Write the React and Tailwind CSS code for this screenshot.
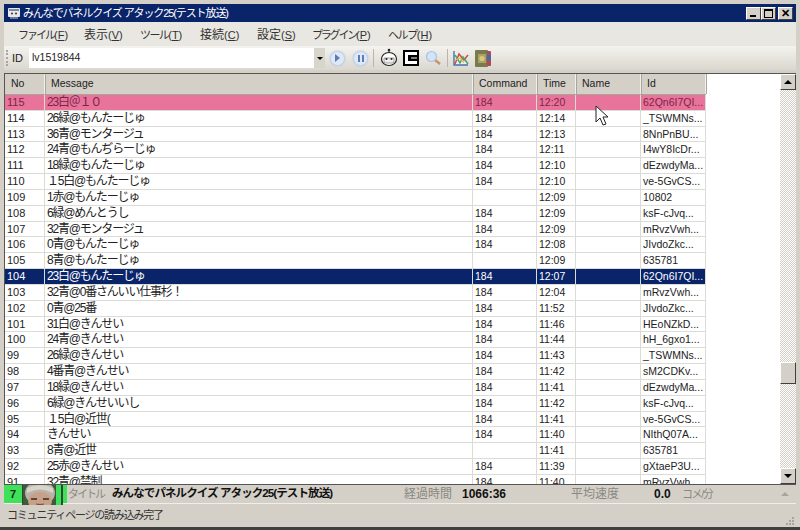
import { Fragment } from "react";

const menus = [
  { label: "ファイル", key: "F", width: "w-[66px]", tone: "text-[11px] tracking-[-2px]" },
  { label: "表示", key: "V", width: "w-[56px]", tone: "" },
  { label: "ツール", key: "T", width: "w-[60px]", tone: "text-[11px] tracking-[-1.6px]" },
  { label: "接続", key: "C", width: "w-[57px]", tone: "" },
  { label: "設定", key: "S", width: "w-[55px]", tone: "" },
  { label: "プラグイン", key: "P", width: "w-[76px]", tone: "text-[11px] tracking-[-2.2px]" },
  { label: "ヘルプ", key: "H", width: "w-[60px]", tone: "text-[11px] tracking-[-1.4px]" },
];

const rows = [
  ["115", "23白＠１０", "184", "12:20", "62Qn6I7QI...", "hit"],
  ["114", "26緑@もんたーじゅ", "184", "12:14", "_TSWMNs..."],
  ["113", "36青@モンタージュ", "184", "12:13", "8NnPnBU..."],
  ["112", "24青@もんぢらーじゅ", "184", "12:11", "I4wY8IcDr..."],
  ["111", "18緑@もんたーじゅ", "184", "12:10", "dEzwdyMa..."],
  ["110", "１5白@もんたーじゅ", "184", "12:10", "ve-5GvCS..."],
  ["109", "1赤@もんたーじゅ", "", "12:09", "10802"],
  ["108", "6緑@めんとうし", "184", "12:09", "ksF-cJvq..."],
  ["107", "32青@モンタージュ", "184", "12:09", "mRvzVwh..."],
  ["106", "0青@もんたーじゅ", "184", "12:08", "JIvdoZkc..."],
  ["105", "8青@もんたーじゅ", "", "12:09", "635781"],
  ["104", "23白@もんたーじゅ", "184", "12:07", "62Qn6I7QI...", "selected"],
  ["103", "32青@0番さんいい仕事杉！", "184", "12:04", "mRvzVwh..."],
  ["102", "0青@25番", "184", "11:52", "JIvdoZkc..."],
  ["101", "31白@きんせい", "184", "11:46", "HEoNZkD..."],
  ["100", "24青@きんせい", "184", "11:44", "hH_6gxo1..."],
  ["99", "26緑@きんせい", "184", "11:43", "_TSWMNs..."],
  ["98", "4番青@きんせい", "184", "11:42", "sM2CDKv..."],
  ["97", "18緑@きんせい", "184", "11:41", "dEzwdyMa..."],
  ["96", "6緑@きんせいいし", "184", "11:42", "ksF-cJvq..."],
  ["95", "１5白@近世(", "184", "11:41", "ve-5GvCS..."],
  ["94", "きんせい", "184", "11:40", "NIthQ07A..."],
  ["93", "8青@近世", "", "11:41", "635781"],
  ["92", "25赤@きんせい", "184", "11:39", "gXtaeP3U..."],
  ["91", "32青@禁制", "184", "11:40", "mRvzVwh..."],
];

const Cell = ({ className, children }) => (
  <div className={`h-full shrink-0 pl-[2px] overflow-hidden whitespace-pre border-r border-[#dcdcd6] ${className}`}>
    {children}
  </div>
);

const Row = ({ no, message, command, time, id, state }) => {
  const tone =
    state === "hit"
      ? "bg-[#e8749c] text-[#7c2545]"
      : state === "selected"
        ? "bg-[#0a246a] text-white"
        : "bg-white text-[#222]";
  return (
    <div className={`flex h-[15.83px] shrink-0 w-[701px] leading-[15px] text-[10.5px] border-b border-[#dcdcd6] ${tone}`}>
      <Cell className="w-[40px] text-[11px]">{no}</Cell>
      <Cell className="w-[428px] text-[12px] tracking-[-1.2px]">{message}</Cell>
      <Cell className="w-[64px]">{command}</Cell>
      <Cell className="w-[39px]">{time}</Cell>
      <Cell className="w-[65px]"></Cell>
      <Cell className="w-[65px]">{id}</Cell>
    </div>
  );
};

const HeaderCell = ({ className, children }) => (
  <div className={`h-full shrink-0 pl-[6px] flex items-center border-r border-[#f2f0ea] shadow-[1px_0_0_#a8a59c] ${className}`}>
    {children}
  </div>
);

const WinButton = ({ children }) => (
  <div className="w-[15px] h-[13px] bg-[#d4d0c8] border-t border-l border-white border-r border-b border-r-[#404040] border-b-[#404040] flex items-center justify-center">
    {children}
  </div>
);

const RoundButton = ({ children }) => (
  <div className="w-[15px] h-[15px] rounded-full bg-[#dfe8f6] border border-[#c2d3ec] flex items-center justify-center shadow-[0_0_2px_#aebfdc]">
    {children}
  </div>
);

const ScrollButton = ({ children }) => (
  <div className="w-[16px] h-[16px] shrink-0 bg-[#d4d0c8] border-t border-l border-white border-r border-b border-r-[#404040] border-b-[#404040] flex items-center justify-center">
    {children}
  </div>
);

const Face = () => (
  <svg width="41" height="20" viewBox="0 0 41 20">
    <rect width="41" height="20" fill="#3fe05a" />
    <path d="M0 0 V20 M40 0 V20" stroke="#2c4a2c" strokeWidth="2" />
    <rect x="1" y="0" width="33" height="20" fill="#3f5a3a" />
    <ellipse cx="18" cy="8" rx="15" ry="12" fill="#b8b4aa" />
    <path d="M5 8 Q18 1 31 8 L31 3 Q18 -3 5 3 Z" fill="#d8d4ca" />
    <ellipse cx="18" cy="16" rx="12" ry="9" fill="#c8a088" />
    <path d="M9 14 h6 M21 14 h6" stroke="#3a2a22" strokeWidth="1.6" />
    <path d="M14 19 q4 1 8 0" stroke="#7a5040" strokeWidth="1.2" fill="none" />
  </svg>
);

export default function App() {
  return (
    <div className="w-[800px] h-[530px] overflow-hidden bg-[#d4d0c8] flex flex-col pt-[4px] px-[4px] border-b-[3px] border-[#404040] text-[12px] font-['Liberation_Sans','Noto_Sans_CJK_JP',sans-serif] text-[#222]">
      {/* Title bar */}
      <div className="h-[18px] shrink-0 bg-[#0a246a] flex items-center pl-[3px] pr-[3px] text-white">
        <svg width="14" height="12" viewBox="0 0 14 12" className="mr-[2px]">
          <rect x="1" y="1" width="12" height="9" rx="1" fill="#e8e8e8" />
          <rect x="2" y="2" width="10" height="2" fill="#7a8aa8" />
          <circle cx="5" cy="6.5" r="1" fill="#333" />
          <circle cx="9" cy="6.5" r="1" fill="#333" />
          <path d="M3 11 h8" stroke="#ccc" />
        </svg>
        <span className="text-[11px] tracking-[-1.1px] whitespace-nowrap">みんなでパネルクイズ アタック25(テスト放送)</span>
        <div className="ml-auto flex">
          <WinButton>
            <div className="w-[6px] h-[2px] bg-black mt-[6px] -ml-[2px]" />
          </WinButton>
          <WinButton>
            <div className="w-[9px] h-[9px] border border-black border-t-2" />
          </WinButton>
          <div className="ml-[2px]">
            <WinButton>
              <span className="text-[11px] leading-none font-bold text-black">✕</span>
            </WinButton>
          </div>
        </div>
      </div>

      {/* Menu */}
      <div className="h-[24px] shrink-0 bg-[#e9e7e1] flex items-center pl-[14px] pt-[1px] text-[#333]">
        {menus.map((m) => (
          <div key={m.key} className={`shrink-0 whitespace-nowrap ${m.width}`}>
            <span className={m.tone}>{m.label}</span>
            <span className="text-[11px]">
              (<span className="underline">{m.key}</span>)
            </span>
          </div>
        ))}
      </div>

      {/* Toolbar */}
      <div className="h-[24px] shrink-0 bg-gradient-to-b from-[#f4f3ef] to-[#dad7ce] flex items-center pl-[2px]">
        <div className="w-[3px] h-[16px] mr-[3px] border-l-2 border-dotted border-[#a8a59c]" />
        <span className="w-[15px] text-[11px]">ID</span>
        <div className="w-[285px] h-[20px] bg-white flex items-center ml-[2px] pl-[3px] text-[10.5px]">
          <span>lv1519844</span>
        </div>
        <div className="w-[11px] h-[20px] bg-[#d8d5cc] flex items-center justify-center">
          <div className="w-0 h-0 border-x-[3px] border-x-transparent border-t-[3px] border-t-black" />
        </div>
        <div className="flex items-center gap-[8px] ml-[5px]">
          <RoundButton>
            <div className="w-0 h-0 border-y-[4px] border-y-transparent border-l-[5px] border-l-[#5a7db8]" />
          </RoundButton>
          <RoundButton>
            <div className="w-[6px] h-[7px] border-x-2 border-[#5a7db8]" />
          </RoundButton>
        </div>
        <div className="w-px h-[18px] bg-[#b8b5ac] ml-[5px] mr-[6px]" />
        <svg width="18" height="20" viewBox="0 0 18 20">
          <path d="M9 1 v4" stroke="#222" />
          <circle cx="9" cy="2" r="1.3" fill="#222" />
          <ellipse cx="9" cy="11" rx="7.5" ry="6.5" fill="#fff" stroke="#222" strokeWidth="1.2" />
          <path d="M4 10 h10 v3 a2 2 0 0 1 -2 2 h-6 a2 2 0 0 1 -2 -2 Z" fill="#eee" stroke="#666" strokeWidth="0.6" />
          <circle cx="6.5" cy="11" r="1" fill="#222" />
          <circle cx="11.5" cy="11" r="1" fill="#222" />
        </svg>
        <svg width="16" height="16" viewBox="0 0 16 16" className="ml-[5px]">
          <rect width="16" height="16" fill="#000" />
          <rect x="2" y="2" width="12" height="12" fill="#fff" />
          <path d="M5 5 h9 v2.5 h-6 v1 h6 v2.5 h-9 Z" fill="#000" />
        </svg>
        <svg width="16" height="16" viewBox="0 0 16 16" className="ml-[6px]">
          <path d="M10 10 L15 14" stroke="#c89468" strokeWidth="2.4" />
          <circle cx="6.5" cy="6.5" r="5" fill="#d4e4f6" stroke="#a8c4e4" strokeWidth="1.2" />
        </svg>
        <div className="w-px h-[18px] bg-[#b8b5ac] ml-[6px] mr-[5px]" />
        <svg width="16" height="16" viewBox="0 0 16 16">
          <path d="M1 1 V15 H15" stroke="#4a6fa8" strokeWidth="1.4" fill="#eef2f8" />
          <path d="M2 14 L6 4 L11 10 L15 5" stroke="#d84848" fill="none" strokeWidth="1.5" />
          <path d="M2 5 L7 13 L10 7 L15 14" stroke="#48a868" fill="none" strokeWidth="1.5" />
          <path d="M2 10 L7 8 L11 13" stroke="#e8b848" fill="none" strokeWidth="1.2" />
        </svg>
        <svg width="16" height="17" viewBox="0 0 16 17" className="ml-[6px]">
          <rect x="0" y="0" width="13" height="17" rx="1" fill="#7a7a4c" />
          <rect x="12" y="1" width="4" height="15" rx="1" fill="#b04a58" />
          <rect x="12" y="5" width="4" height="5" fill="#4a68a8" />
          <rect x="3" y="4" width="8" height="9" fill="#a8a468" />
          <circle cx="7" cy="8.5" r="2.6" fill="#d8c878" />
        </svg>
      </div>

      {/* List with scrollbar */}
      <div className="h-[411px] shrink-0 mt-[3px] flex flex-col border-t border-l border-[#555] bg-white overflow-hidden">
        <div className="flex flex-1 min-h-0">
          <div className="w-[775px] shrink-0 flex flex-col overflow-hidden">
            <div className="flex h-[21px] shrink-0 w-[701px] bg-[#d4d0c8] border-b border-[#a8a59c] text-[10.5px]">
              <HeaderCell className="w-[40px]">No</HeaderCell>
              <HeaderCell className="w-[428px]">Message</HeaderCell>
              <HeaderCell className="w-[64px]">Command</HeaderCell>
              <HeaderCell className="w-[39px]">Time</HeaderCell>
              <HeaderCell className="w-[65px]">Name</HeaderCell>
              <HeaderCell className="w-[65px]">Id</HeaderCell>
            </div>
            {rows.map(([no, message, command, time, id, state]) => (
              <Fragment key={no}>
                <Row no={no} message={message} command={command} time={time} id={id} state={state} />
              </Fragment>
            ))}
          </div>
          <div className="w-[16px] shrink-0 flex flex-col bg-[repeating-conic-gradient(#d4d0c8_0_25%,#ffffff_0_50%)] bg-[length:2px_2px]">
            <ScrollButton>
              <div className="w-0 h-0 border-x-[4px] border-x-transparent border-b-[4px] border-b-black" />
            </ScrollButton>
            <div className="flex-1">
              <div className="h-[22px] mt-[272px] bg-[#d4d0c8] border-t border-l border-white border-r border-b border-r-[#404040] border-b-[#404040]" />
            </div>
            <ScrollButton>
              <div className="w-0 h-0 border-x-[4px] border-x-transparent border-t-[4px] border-t-black" />
            </ScrollButton>
          </div>
        </div>
      </div>

      {/* Info bar */}
      <div className="h-[20px] shrink-0 flex items-center border-t border-[#555] border-b border-b-[#f0eee8] whitespace-nowrap">
        <div className="w-[63px] h-full shrink-0 bg-[#3fe05a] relative flex items-center">
          <span className="pl-[6px] font-bold text-[11px] text-[#103010]">7</span>
          <div className="absolute left-[18px] top-0">
            <Face />
          </div>
        </div>
        <span className="w-[45px] shrink-0 pl-[1px] text-[11px] tracking-[-2px] text-[#8a8880]">タイトル</span>
        <span className="w-[292px] shrink-0 text-[11.5px] tracking-[-0.9px] font-bold text-[#111]">みんなでパネルクイズ アタック25(テスト放送)</span>
        <span className="w-[58px] shrink-0 text-[#8a8880]">経過時間</span>
        <span className="w-[109px] shrink-0 font-bold text-[#111]">1066:36</span>
        <span className="w-[83px] shrink-0 text-[#8a8880]">平均速度</span>
        <span className="w-[28px] shrink-0 font-bold text-[#111]">0.0</span>
        <span className="text-[11px] tracking-[-1.4px] text-[#8a8880]">コメ/分</span>
        <div className="ml-auto mr-[7px] w-0 h-0 border-x-[4px] border-x-transparent border-b-[4px] border-b-[#a8a59c]" />
      </div>

      {/* Status bar */}
      <div className="flex-1 flex items-center pl-[3px] relative">
        <span className="text-[11px] tracking-[-1.2px] text-[#333] whitespace-nowrap">コミュニティページの読み込み完了</span>
        <div className="absolute right-[2px] bottom-[2px] grid grid-cols-3 gap-[1px]">
          <span className="w-[2px] h-[2px]" />
          <span className="w-[2px] h-[2px]" />
          <span className="w-[2px] h-[2px] bg-[#a8a59c]" />
          <span className="w-[2px] h-[2px]" />
          <span className="w-[2px] h-[2px] bg-[#a8a59c]" />
          <span className="w-[2px] h-[2px] bg-[#a8a59c]" />
          <span className="w-[2px] h-[2px] bg-[#a8a59c]" />
          <span className="w-[2px] h-[2px] bg-[#a8a59c]" />
          <span className="w-[2px] h-[2px] bg-[#a8a59c]" />
        </div>
      </div>

      {/* Mouse pointer */}
      <svg width="15" height="22" viewBox="0 0 15 22" className="absolute left-[595px] top-[105px]">
        <path d="M1 1 V17 L5 13 L8 20 L11 19 L8 12 L13 12 Z" fill="#fff" stroke="#222" strokeWidth="1" />
      </svg>
    </div>
  );
}
